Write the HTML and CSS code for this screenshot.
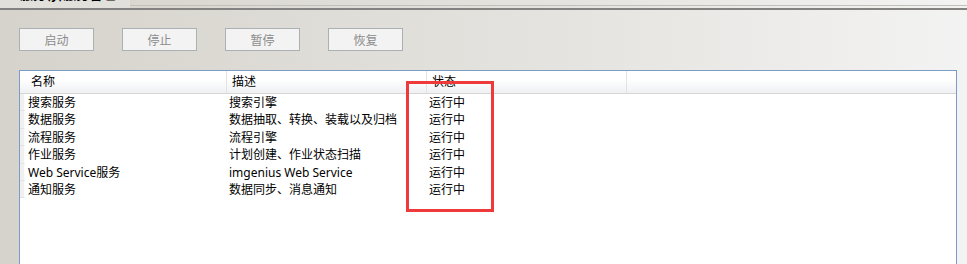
FILE: index.html
```html
<!DOCTYPE html>
<html lang="zh-CN">
<head>
    <meta charset="UTF-8">
    <title>服务管理</title>
    <link rel="stylesheet" href="styles.css">
</head>
<body>
    <div class="topbar">
        <div class="tab"><span>服务(y)服务管理</span></div>
        <div class="rule"></div>
    </div>

    <div class="toolbar">
        <button class="btn" disabled>启动</button>
        <button class="btn" disabled>停止</button>
        <button class="btn" disabled>暂停</button>
        <button class="btn" disabled>恢复</button>
    </div>

    <div class="grid">
        <div class="row head">
            <div class="mark"></div>
            <div class="cell">名称</div>
            <div class="cell">描述</div>
            <div class="cell">状态</div>
            <div class="cell last"></div>
        </div>
        <div class="row">
            <div class="mark"></div>
            <div class="cell">搜索服务</div>
            <div class="cell">搜索引擎</div>
            <div class="cell">运行中</div>
        </div>
        <div class="row">
            <div class="mark"></div>
            <div class="cell">数据服务</div>
            <div class="cell">数据抽取、转换、装载以及归档</div>
            <div class="cell">运行中</div>
        </div>
        <div class="row">
            <div class="mark"></div>
            <div class="cell">流程服务</div>
            <div class="cell">流程引擎</div>
            <div class="cell">运行中</div>
        </div>
        <div class="row">
            <div class="mark"></div>
            <div class="cell">作业服务</div>
            <div class="cell">计划创建、作业状态扫描</div>
            <div class="cell">运行中</div>
        </div>
        <div class="row">
            <div class="mark"></div>
            <div class="cell">Web Service服务</div>
            <div class="cell">imgenius Web Service</div>
            <div class="cell">运行中</div>
        </div>
        <div class="row">
            <div class="mark"></div>
            <div class="cell">通知服务</div>
            <div class="cell">数据同步、消息通知</div>
            <div class="cell">运行中</div>
        </div>
    </div>

    <div class="highlight"></div>
</body>
</html>
```

FILE: styles.css
```css
html, body{
    margin:0;
    height:264px;
    overflow:hidden;
}
body{
    position:relative;
    background: linear-gradient(to right, #d6d3cc, #e6e4e0 60%, #f3f3f3);
    font-family: "Noto Sans", "Noto Sans CJK SC", sans-serif;
    font-size:12px;
    color:#000;
}
.topbar{
    display:flex;
    height:8px;
    border-bottom:2px solid #838280;
}
.tab{
    width:130px;
    height:8px;
    overflow:hidden;
    background:#e2e0db;
}
.tab span{
    display:block;
    margin-top:-14px;
    padding-left:20px;
    font-family: "Noto Sans CJK SC", sans-serif;
    font-weight:bold;
    font-size:13px;
    line-height:15px;
    white-space:nowrap;
}
.rule{
    flex:1;
    margin-top:5px;
    height:1px;
    background:#c3c0b9;
}
.toolbar{
    display:flex;
    gap:28px;
    padding:18px 0 0 19px;
}
.btn{
    width:75px;
    height:23px;
    padding:0;
    border:1px solid #abb0b4;
    background:#f3f3f3;
    color:#8b8b8b;
    font-family: "Noto Sans CJK SC", sans-serif;
    font-size:12px;
}
.grid{
    margin:19px 0 0 19px;
    width:936px;
    height:200px;
    border:1px solid #7b9cc4;
    background:#fff;
}
.row{
    display:flex;
    height:17.4px;
    line-height:17.4px;
}
.row .cell{
    width:200px;
    padding-left:3px;
    box-sizing:border-box;
    white-space:nowrap;
}
.mark{
    width:5px;
    background:#f0f0f0;
    border-right:1px solid #fbfbfb;
    border-bottom:1px solid #e1e1e1;
    box-sizing:border-box;
}
.head{
    height:23px;
    line-height:22px;
    background: linear-gradient(#ffffff 35%, #f0f1f4);
    border-bottom:1px solid #d6d6d6;
    box-sizing:border-box;
}
.head .mark{
    width:6px;
    background:none;
    border:0;
}
.head .cell{
    padding-left:5px;
    border-right:1px solid #e3e3e3;
}
.head .last{
    flex:1;
    border-right:0;
}
.row .cell:nth-child(2){
    width:201px;
}
.highlight{
    position:absolute;
    left:406px;
    top:81px;
    width:82px;
    height:125px;
    border:3px solid #ee3a3a;
}
```
